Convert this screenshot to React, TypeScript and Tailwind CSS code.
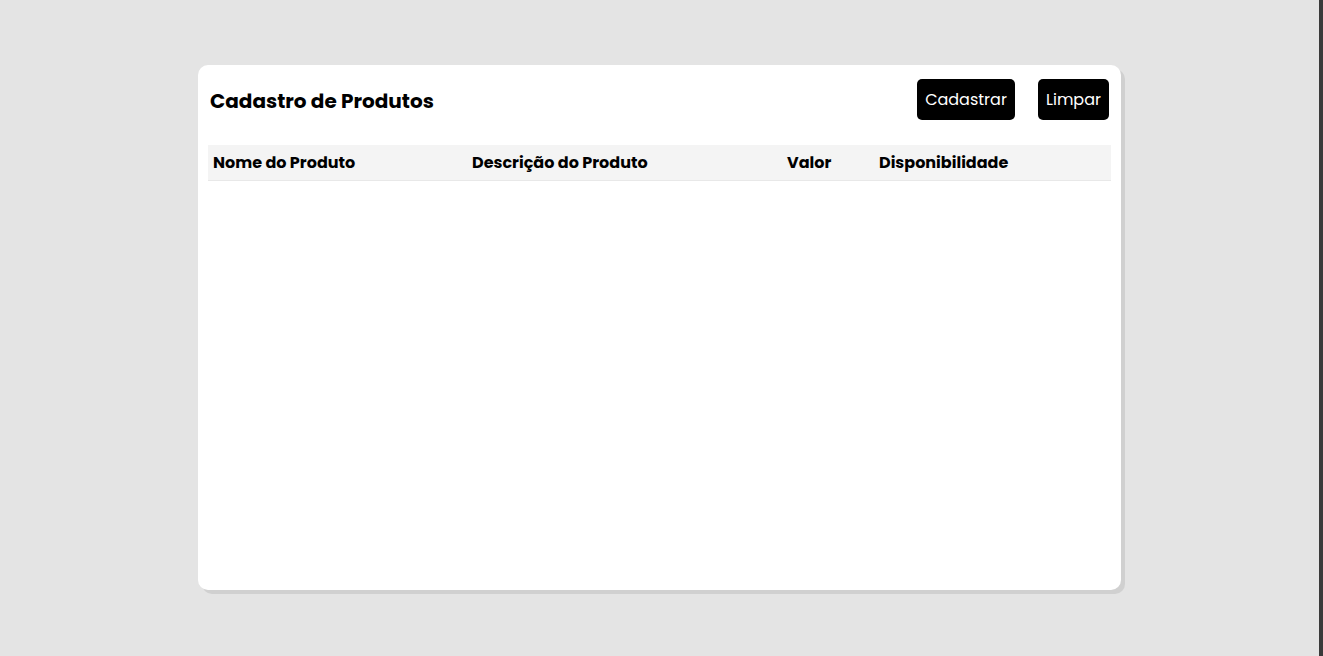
const columns = [
  { label: "Nome do Produto", width: "w-[259px]" },
  { label: "Descrição do Produto", width: "w-[315px]" },
  { label: "Valor", width: "w-[92px]" },
  { label: "Disponibilidade", width: "" },
]

export default function App() {
  return (
    <div className="flex h-[656px] w-full bg-[#e4e4e4] font-['Poppins','Open_Sans',sans-serif] text-black">
      <main className="flex-1 pl-[198px] pt-[65px]">
        <section className="h-[525px] w-[923px] rounded-[10px] bg-white shadow-[4px_4px_0_0_#d0d0d0]">
          <header className="flex items-center justify-between pl-3 pr-3 pt-[14px]">
            <h1 className="pt-[2px] text-[20px] font-bold">Cadastro de Produtos</h1>
            <div className="flex gap-[23px]">
              <button className="h-[41px] w-[98px] rounded-[5px] bg-black text-[16px] text-white">Cadastrar</button>
              <button className="h-[41px] w-[71px] rounded-[5px] bg-black text-[16px] text-white">Limpar</button>
            </div>
          </header>
          <table className="mx-[10px] mt-[25px] w-[903px] border-collapse">
            <thead>
              <tr className="h-[35px] border-b border-[#e8e8e8] bg-[#f4f4f4]">
                {columns.map((col) => (
                  <th key={col.label} className={`${col.width} px-[5px] pt-[2px] text-left text-[16px] font-bold`}>
                    {col.label}
                  </th>
                ))}
              </tr>
            </thead>
            <tbody />
          </table>
        </section>
      </main>
      <div className="w-[4px] bg-[#3a3a3a]" />
    </div>
  )
}
